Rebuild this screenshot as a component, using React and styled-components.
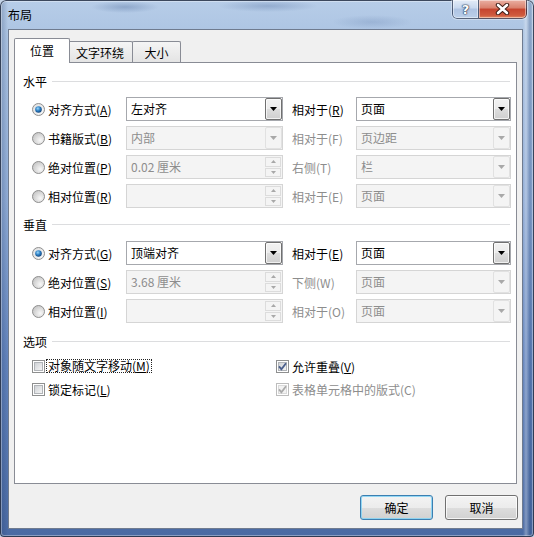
import React from "react";
import styled, { createGlobalStyle } from "styled-components";

const GlobalStyle = createGlobalStyle`
  html, body {
    margin: 0;
    padding: 0;
    background: #c4d3e6;
  }
  body {
    font-family: "Noto Sans CJK SC", "Microsoft YaHei", sans-serif;
    font-size: 12px;
    color: #000;
  }
`;

const Window = styled.div`
  box-sizing: border-box;
  width: 534px;
  height: 537px;
  padding: 0 11px 8px 8px;
  display: flex;
  flex-direction: column;
  border-radius: 6px 6px 4px 4px;
  overflow: hidden;
  box-shadow: inset 0 0 0 1px rgba(22, 34, 56, 0.8),
    inset 0 0 0 2px rgba(255, 255, 255, 0.35);
  background:
    radial-gradient(34px 6px at 125px 7px, rgba(70, 100, 150, 0.35), transparent),
    radial-gradient(50px 6px at 268px 6px, rgba(70, 100, 150, 0.3), transparent),
    radial-gradient(40px 7px at 372px 22px, rgba(70, 100, 150, 0.2), transparent),
    linear-gradient(90deg, rgba(30, 55, 100, 0.3) 0, rgba(255, 255, 255, 0) 8px,
      rgba(255, 255, 255, 0) 523px, rgba(255, 255, 255, 0.3) 526px,
      rgba(40, 70, 120, 0.3) 530px, rgba(0, 0, 0, 0) 534px),
    linear-gradient(180deg, #b7cde8 0, #abc3e2 40px, #90acd6 200px, #6384bd 360px, #4a6aa3 537px);
`;

const TitleBar = styled.div`
  height: 29px;
  margin: 0 -11px 0 -8px;
  padding: 0 7px 0 8px;
  display: flex;
  align-items: flex-start;
  justify-content: space-between;
`;

const Title = styled.div`
  padding-top: 1px;
  line-height: 28px;
  color: #000;
`;

const Captions = styled.div`
  display: flex;
  height: 19px;
  border-radius: 0 0 5px 5px;
  overflow: hidden;
  box-shadow: 0 0 0 1px rgba(255, 255, 255, 0.35);
`;

const CaptionButton = styled.div`
  box-sizing: border-box;
  width: ${(p) => p.$width}px;
  height: 19px;
  display: flex;
  align-items: center;
  justify-content: center;
  border: 1px solid rgba(30, 44, 70, 0.7);
  border-top: none;
  border-left: ${(p) => (p.$close ? "none" : "1px solid rgba(30, 44, 70, 0.7)")};
  border-radius: ${(p) => (p.$close ? "0 0 5px 0" : "0 0 0 5px")};
  background: ${(p) =>
    p.$close
      ? "linear-gradient(180deg, #eab0a3 0%, #d9806c 45%, #c5442f 50%, #cf5a3e 85%, #e18a63 100%)"
      : "linear-gradient(180deg, #e3ecf7 0%, #c8d8ee 45%, #aec3e2 50%, #bcd0ea 100%)"};
  box-shadow: inset 0 0 0 1px rgba(255, 255, 255, 0.45);
`;

const HelpGlyph = styled.span`
  font-family: "DejaVu Sans", sans-serif;
  font-weight: bold;
  font-size: 13px;
  line-height: 13px;
  color: #fff;
  text-shadow: 0 0 1px #1f324f, 0 0 1px #1f324f, 0 0 2px #1f324f;
`;

const Client = styled.div`
  flex: 1;
  display: flex;
  flex-direction: column;
  background: #f0f0f0;
  border: 1px solid rgba(42, 60, 90, 0.65);
  padding: 8px 5px 0;
`;

const TabStrip = styled.div`
  display: flex;
  align-items: flex-end;
  height: 24px;
  position: relative;
  z-index: 1;
`;

const Tab = styled.div`
  box-sizing: border-box;
  width: ${(p) => p.$width}px;
  height: ${(p) => (p.$active ? 25 : 21)}px;
  margin-left: ${(p) => p.$offset || 0}px;
  margin-bottom: ${(p) => (p.$active ? -1 : 0)}px;
  display: flex;
  align-items: center;
  justify-content: center;
  padding-bottom: ${(p) => (p.$active ? 2 : 0)}px;
  border: 1px solid #898c95;
  border-bottom: none;
  border-radius: 2px 2px 0 0;
  background: ${(p) => (p.$active ? "#fff" : "linear-gradient(180deg, #f5f5f5, #e4e4e4)")};
  position: relative;
  z-index: ${(p) => (p.$active ? 2 : 1)};
  color: #000;
`;

const Panel = styled.div`
  box-sizing: border-box;
  height: 422px;
  border: 1px solid #898c95;
  background: #fff;
  padding: 11px 6px 0 8px;
`;

const Section = styled.div`
  margin-top: ${(p) => p.$top || 0}px;
`;

const SectionHeader = styled.div`
  display: flex;
  align-items: center;
  gap: 5px;
  height: 16px;
  line-height: 16px;
`;

const Rule = styled.div`
  flex: 1;
  height: 1px;
  margin-top: -1px;
  background: #dcdddf;
`;

const Rows = styled.div`
  display: flex;
  flex-direction: column;
  gap: ${(p) => p.$gap}px;
  margin: ${(p) => p.$top}px 0 0 9px;
`;

const FieldRow = styled.div`
  display: grid;
  grid-template-columns: 94px 157px 73px 155px;
  height: 24px;
  align-items: center;
`;

const Choice = styled.label`
  display: flex;
  align-items: center;
  gap: 3px;
  white-space: nowrap;
`;

const Text = styled.span`
  color: ${(p) => (p.$disabled ? "#8d8d8d" : "#000")};
  white-space: nowrap;
  padding-left: ${(p) => p.$indent || 0}px;
  u {
    text-underline-offset: 1px;
  }
`;

const FocusText = styled(Text)`
  line-height: 12px;
  padding: 0 1px;
  margin-left: -2px;
  border: 1px dotted #222;
`;

const Field = styled.div`
  box-sizing: border-box;
  height: 24px;
  display: flex;
  align-items: stretch;
  border: 1px solid ${(p) => (p.$disabled ? "#d5d5d5" : "#a6a8ad")};
  background: ${(p) => (p.$disabled ? "#f4f4f4" : "#fff")};
  color: ${(p) => (p.$disabled ? "#8d8d8d" : "#000")};
`;

const FieldText = styled.span`
  flex: 1;
  padding-left: 4px;
  line-height: 22px;
  white-space: nowrap;
`;

const DropButton = styled.span`
  box-sizing: border-box;
  width: 17px;
  display: flex;
  align-items: center;
  justify-content: center;
  border: 1px solid ${(p) => (p.$disabled ? "#e1e1e1" : "#707070")};
  border-radius: 2px;
  background: ${(p) =>
    p.$disabled
      ? "#f4f4f4"
      : "linear-gradient(180deg, #f2f2f2 0%, #ebebeb 50%, #dddddd 51%, #cfcfcf 100%)"};
  box-shadow: ${(p) => (p.$disabled ? "none" : "inset 0 0 0 1px rgba(255,255,255,0.7)")};
`;

const SpinBox = styled.span`
  box-sizing: border-box;
  width: 17px;
  display: flex;
  flex-direction: column;
  gap: 1px;
  padding: 1px 1px 1px 0;
`;

const SpinHalf = styled.span`
  flex: 1;
  display: flex;
  align-items: center;
  justify-content: center;
  border: 1px solid #dcdcdc;
  background: #f4f4f4;
`;

const CheckGrid = styled.div`
  display: grid;
  grid-template-columns: 244px auto;
  grid-auto-rows: 20px;
  row-gap: 3px;
  margin: 6px 0 0 9px;
  align-items: center;
`;

const ButtonBar = styled.div`
  display: flex;
  justify-content: flex-end;
  gap: 12px;
  padding-top: 11px;
  margin-right: -1px;
`;

const DialogButton = styled.button`
  box-sizing: border-box;
  width: 73px;
  height: 25px;
  padding: 0;
  font: inherit;
  font-size: 12px;
  color: #000;
  border: 1px solid ${(p) => (p.$default ? "#3c7fb1" : "#707070")};
  border-radius: 3px;
  background: linear-gradient(180deg, #f3f3f3 0%, #ececec 50%, #dddddd 51%, #d1d1d1 100%);
  box-shadow: inset 0 0 0 1px
    ${(p) => (p.$default ? "rgba(130, 210, 245, 0.85)" : "rgba(255, 255, 255, 0.75)")};
`;

function Radio({ checked }) {
  return (
    <svg width="13" height="13" viewBox="0 0 13 13">
      <defs>
        <radialGradient id="radioOff" cx="65%" cy="65%" r="70%">
          <stop offset="0" stopColor="#f8f8f8" />
          <stop offset="1" stopColor="#c6c6c6" />
        </radialGradient>
        <radialGradient id="radioOn" cx="60%" cy="60%" r="70%">
          <stop offset="0" stopColor="#ffffff" />
          <stop offset="1" stopColor="#dcdcdc" />
        </radialGradient>
        <radialGradient id="radioDot" cx="40%" cy="35%" r="65%">
          <stop offset="0" stopColor="#9bd8fb" />
          <stop offset="0.55" stopColor="#2a7dc2" />
          <stop offset="1" stopColor="#17477d" />
        </radialGradient>
      </defs>
      <circle
        cx="6.5"
        cy="6.5"
        r="6"
        fill={checked ? "url(#radioOn)" : "url(#radioOff)"}
        stroke="#8f8f8f"
      />
      {checked && <circle cx="6.5" cy="6.5" r="3.3" fill="url(#radioDot)" />}
    </svg>
  );
}

function CheckBox({ checked, disabled }) {
  return (
    <svg width="13" height="13" viewBox="0 0 13 13">
      <defs>
        <linearGradient id="cbFace" x1="0" y1="0" x2="1" y2="1">
          <stop offset="0" stopColor="#cdd0d4" />
          <stop offset="1" stopColor="#f7f7f7" />
        </linearGradient>
      </defs>
      <rect x="0.5" y="0.5" width="12" height="12" fill="#fff" stroke={disabled ? "#bdbdbd" : "#8e8f8f"} />
      <rect
        x="2.5"
        y="2.5"
        width="8"
        height="8"
        fill={disabled ? "#f2f2f2" : "url(#cbFace)"}
        stroke={disabled ? "#dadada" : "#b1b4b8"}
      />
      {checked && (
        <path
          d="M3 6.4 L5.4 9.2 L10 3.2"
          fill="none"
          stroke={disabled ? "#a9a9a9" : "#4a5f8c"}
          strokeWidth="1.8"
        />
      )}
    </svg>
  );
}

function Arrow({ up, small, color }) {
  const w = small ? 5 : 7;
  const h = small ? 3 : 4;
  const pts = up ? `0,${h} ${w},${h} ${w / 2},0` : `0,0 ${w},0 ${w / 2},${h}`;
  return (
    <svg width={w} height={h} viewBox={`0 0 ${w} ${h}`}>
      <polygon points={pts} fill={color} />
    </svg>
  );
}

function AccessText({ text, hotkey, disabled, focused, indent }) {
  const Comp = focused ? FocusText : Text;
  return (
    <Comp $disabled={disabled} $indent={indent}>
      {text}({disabled ? hotkey : <u>{hotkey}</u>})
    </Comp>
  );
}

function ComboBox({ value, disabled }) {
  return (
    <Field $disabled={disabled}>
      <FieldText>{value}</FieldText>
      <DropButton $disabled={disabled}>
        <Arrow color={disabled ? "#a8a8a8" : "#000"} />
      </DropButton>
    </Field>
  );
}

function SpinField({ value }) {
  return (
    <Field $disabled>
      <FieldText>{value}</FieldText>
      <SpinBox>
        <SpinHalf>
          <Arrow up small color="#a8a8a8" />
        </SpinHalf>
        <SpinHalf>
          <Arrow small color="#a8a8a8" />
        </SpinHalf>
      </SpinBox>
    </Field>
  );
}

const horizontal = [
  {
    label: "对齐方式", key: "A", checked: true,
    field: { kind: "combo", value: "左对齐", enabled: true },
    rel: { label: "相对于", key: "R", enabled: true },
    relValue: "页面",
  },
  {
    label: "书籍版式", key: "B",
    field: { kind: "combo", value: "内部" },
    rel: { label: "相对于", key: "F" },
    relValue: "页边距",
  },
  {
    label: "绝对位置", key: "P",
    field: { kind: "spin", value: "0.02 厘米" },
    rel: { label: "右侧", key: "T" },
    relValue: "栏",
  },
  {
    label: "相对位置", key: "R",
    field: { kind: "spin", value: "" },
    rel: { label: "相对于", key: "E" },
    relValue: "页面",
  },
];

const vertical = [
  {
    label: "对齐方式", key: "G", checked: true,
    field: { kind: "combo", value: "顶端对齐", enabled: true },
    rel: { label: "相对于", key: "E", enabled: true },
    relValue: "页面",
  },
  {
    label: "绝对位置", key: "S",
    field: { kind: "spin", value: "3.68 厘米" },
    rel: { label: "下侧", key: "W" },
    relValue: "页面",
  },
  {
    label: "相对位置", key: "I",
    field: { kind: "spin", value: "" },
    rel: { label: "相对于", key: "O" },
    relValue: "页面",
  },
];

function PositionRow({ row }) {
  return (
    <FieldRow>
      <Choice>
        <Radio checked={row.checked} />
        <AccessText text={row.label} hotkey={row.key} />
      </Choice>
      {row.field.kind === "combo" ? (
        <ComboBox value={row.field.value} disabled={!row.field.enabled} />
      ) : (
        <SpinField value={row.field.value} />
      )}
      <AccessText text={row.rel.label} hotkey={row.rel.key} disabled={!row.rel.enabled} indent={9} />
      <ComboBox value={row.relValue} disabled={!row.rel.enabled} />
    </FieldRow>
  );
}

export default function App() {
  return (
    <>
      <GlobalStyle />
      <Window>
        <TitleBar>
          <Title>布局</Title>
          <Captions>
            <CaptionButton $width={27}>
              <HelpGlyph>?</HelpGlyph>
            </CaptionButton>
            <CaptionButton $width={48} $close>
              <svg width="15" height="12" viewBox="0 0 15 12">
                <path d="M3 2 L12 10 M12 2 L3 10" stroke="#3a1a14" strokeWidth="4.4" strokeLinecap="round" />
                <path d="M3 2 L12 10 M12 2 L3 10" stroke="#fff" strokeWidth="2.6" strokeLinecap="round" />
              </svg>
            </CaptionButton>
          </Captions>
        </TitleBar>
        <Client>
          <TabStrip>
            <Tab $active $width={56}>位置</Tab>
            <Tab $width={66} $offset={-3}>文字环绕</Tab>
            <Tab $width={49} $offset={-1}>大小</Tab>
          </TabStrip>
          <Panel>
            <Section>
              <SectionHeader>
                水平
                <Rule />
              </SectionHeader>
              <Rows $gap={5} $top={7}>
                {horizontal.map((row, i) => (
                  <PositionRow key={i} row={row} />
                ))}
              </Rows>
            </Section>
            <Section $top={9}>
              <SectionHeader>
                垂直
                <Rule />
              </SectionHeader>
              <Rows $gap={5} $top={8}>
                {vertical.map((row, i) => (
                  <PositionRow key={i} row={row} />
                ))}
              </Rows>
            </Section>
            <Section $top={11}>
              <SectionHeader>
                选项
                <Rule />
              </SectionHeader>
              <CheckGrid>
                <Choice>
                  <CheckBox />
                  <AccessText text="对象随文字移动" hotkey="M" focused />
                </Choice>
                <Choice>
                  <CheckBox checked />
                  <AccessText text="允许重叠" hotkey="V" />
                </Choice>
                <Choice>
                  <CheckBox />
                  <AccessText text="锁定标记" hotkey="L" />
                </Choice>
                <Choice>
                  <CheckBox checked disabled />
                  <AccessText text="表格单元格中的版式" hotkey="C" disabled />
                </Choice>
              </CheckGrid>
            </Section>
          </Panel>
          <ButtonBar>
            <DialogButton $default>确定</DialogButton>
            <DialogButton>取消</DialogButton>
          </ButtonBar>
        </Client>
      </Window>
    </>
  );
}
